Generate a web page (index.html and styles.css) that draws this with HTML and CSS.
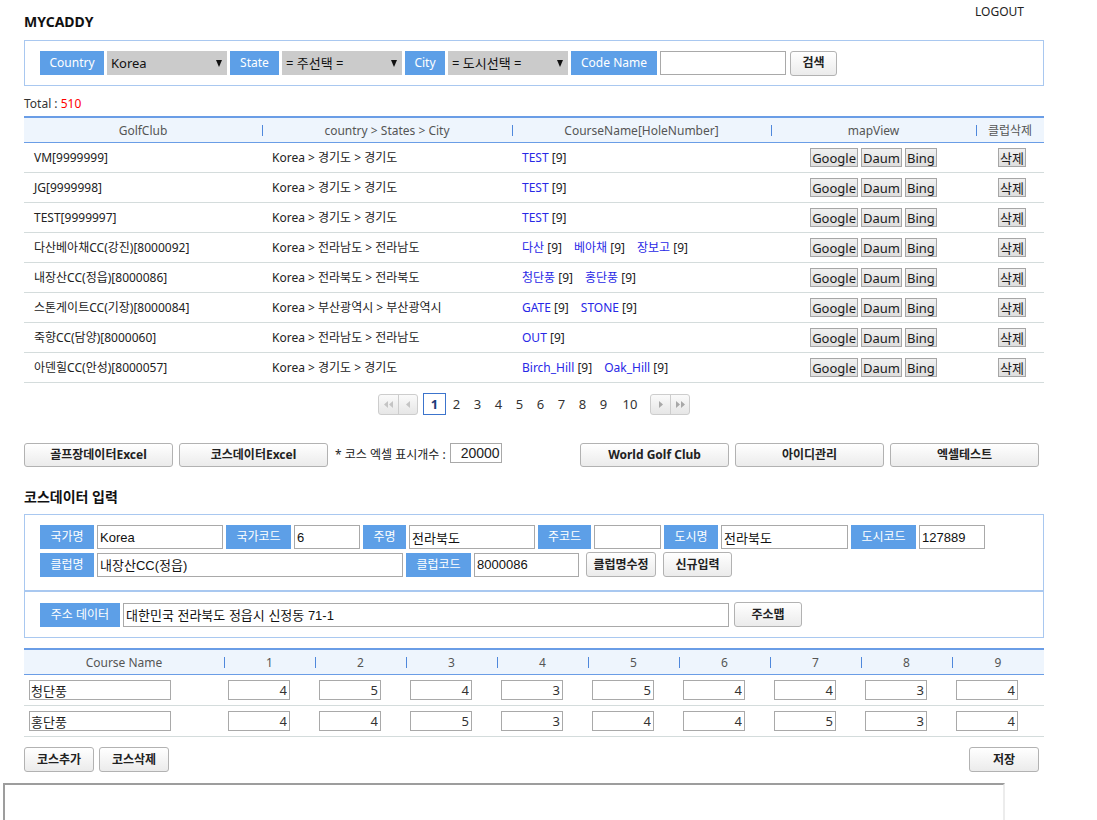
FILE: index.html
```html
<!DOCTYPE html>
<html lang="ko">
<head>
<meta charset="utf-8">
<title>MYCADDY</title>
<link rel="stylesheet" href="styles.css">
</head>
<body>
<div class="page">
  <header class="top">
    <h1 class="brand">MYCADDY</h1>
    <a class="logout" href="#">LOGOUT</a>
  </header>

  <form class="search">
    <span class="lbl w-country">Country</span>
    <div class="sel"><select><option>Korea</option></select><span class="caret"></span></div>
    <span class="lbl w-state">State</span>
    <div class="sel"><select><option>= 주선택 =</option></select><span class="caret"></span></div>
    <span class="lbl w-city">City</span>
    <div class="sel"><select><option>= 도시선택 =</option></select><span class="caret"></span></div>
    <span class="lbl w-code">Code Name</span>
    <input class="sinput" type="text">
    <button class="btn btn-search" type="button">검색</button>
  </form>

  <div class="total">Total : <span class="count">510</span></div>

  <table class="list">
    <colgroup><col class="c1"><col class="c2"><col class="c3"><col class="c4"><col class="c5"></colgroup>
    <thead>
      <tr><th>GolfClub</th><th>country &gt; States &gt; City</th><th>CourseName[HoleNumber]</th><th>mapView</th><th>클럽삭제</th></tr>
    </thead>
    <tbody>
      <tr><td>VM[9999999]</td><td>Korea &gt; 경기도 &gt; 경기도</td><td><span class="crs"><a href="#">TEST</a> [9]</span></td><td><div class="maps"><button class="mb">Google</button><button class="mb">Daum</button><button class="mb">Bing</button></div></td><td class="ctr"><button class="mb">삭제</button></td></tr>
      <tr><td>JG[9999998]</td><td>Korea &gt; 경기도 &gt; 경기도</td><td><span class="crs"><a href="#">TEST</a> [9]</span></td><td><div class="maps"><button class="mb">Google</button><button class="mb">Daum</button><button class="mb">Bing</button></div></td><td class="ctr"><button class="mb">삭제</button></td></tr>
      <tr><td>TEST[9999997]</td><td>Korea &gt; 경기도 &gt; 경기도</td><td><span class="crs"><a href="#">TEST</a> [9]</span></td><td><div class="maps"><button class="mb">Google</button><button class="mb">Daum</button><button class="mb">Bing</button></div></td><td class="ctr"><button class="mb">삭제</button></td></tr>
      <tr><td>다산베아채CC(강진)[8000092]</td><td>Korea &gt; 전라남도 &gt; 전라남도</td><td><span class="crs"><a href="#">다산</a> [9]</span><span class="crs"><a href="#">베아채</a> [9]</span><span class="crs"><a href="#">장보고</a> [9]</span></td><td><div class="maps"><button class="mb">Google</button><button class="mb">Daum</button><button class="mb">Bing</button></div></td><td class="ctr"><button class="mb">삭제</button></td></tr>
      <tr><td>내장산CC(정읍)[8000086]</td><td>Korea &gt; 전라북도 &gt; 전라북도</td><td><span class="crs"><a href="#">청단풍</a> [9]</span><span class="crs"><a href="#">홍단풍</a> [9]</span></td><td><div class="maps"><button class="mb">Google</button><button class="mb">Daum</button><button class="mb">Bing</button></div></td><td class="ctr"><button class="mb">삭제</button></td></tr>
      <tr><td>스톤게이트CC(기장)[8000084]</td><td>Korea &gt; 부산광역시 &gt; 부산광역시</td><td><span class="crs"><a href="#">GATE</a> [9]</span><span class="crs"><a href="#">STONE</a> [9]</span></td><td><div class="maps"><button class="mb">Google</button><button class="mb">Daum</button><button class="mb">Bing</button></div></td><td class="ctr"><button class="mb">삭제</button></td></tr>
      <tr><td>죽향CC(담양)[8000060]</td><td>Korea &gt; 전라남도 &gt; 전라남도</td><td><span class="crs"><a href="#">OUT</a> [9]</span></td><td><div class="maps"><button class="mb">Google</button><button class="mb">Daum</button><button class="mb">Bing</button></div></td><td class="ctr"><button class="mb">삭제</button></td></tr>
      <tr><td>아덴힐CC(안성)[8000057]</td><td>Korea &gt; 경기도 &gt; 경기도</td><td><span class="crs"><a href="#">Birch_Hill</a> [9]</span><span class="crs"><a href="#">Oak_Hill</a> [9]</span></td><td><div class="maps"><button class="mb">Google</button><button class="mb">Daum</button><button class="mb">Bing</button></div></td><td class="ctr"><button class="mb">삭제</button></td></tr>
    </tbody>
  </table>

  <nav class="pager">
    <span class="nav">
      <span class="nv"><svg width="9" height="7" viewBox="0 0 9 7"><path d="M4 0 L0 3.5 L4 7Z M9 0 L5 3.5 L9 7Z" fill="#c4c4c4"/></svg></span>
      <span class="nv"><svg width="4" height="7" viewBox="0 0 4 7"><path d="M4 0 L0 3.5 L4 7Z" fill="#c4c4c4"/></svg></span>
    </span>
    <span class="pg cur">1</span>
    <span class="pg">2</span>
    <span class="pg">3</span>
    <span class="pg">4</span>
    <span class="pg">5</span>
    <span class="pg">6</span>
    <span class="pg">7</span>
    <span class="pg">8</span>
    <span class="pg">9</span>
    <span class="pg pg-wide">10</span>
    <span class="nav nav-r">
      <span class="nv"><svg width="4" height="7" viewBox="0 0 4 7"><path d="M0 0 L4 3.5 L0 7Z" fill="#a8a8a8"/></svg></span>
      <span class="nv"><svg width="9" height="7" viewBox="0 0 9 7"><path d="M0 0 L4 3.5 L0 7Z M5 0 L9 3.5 L5 7Z" fill="#a8a8a8"/></svg></span>
    </span>
  </nav>

  <div class="actions">
    <button class="btn wide" type="button">골프장데이터Excel</button>
    <button class="btn wide" type="button">코스데이터Excel</button>
    <span class="cnt-text">* 코스 엑셀 표시개수 :</span>
    <input class="cnt-input" type="text" value="20000">
    <div class="right-group">
      <button class="btn wide" type="button">World Golf Club</button>
      <button class="btn wide" type="button">아이디관리</button>
      <button class="btn wide" type="button">엑셀테스트</button>
    </div>
  </div>

  <h2 class="sub">코스데이터 입력</h2>

  <div class="fbox fbox-1">
    <div class="frow">
      <span class="lbl f54">국가명</span><input class="fin w126" type="text" value="Korea">
      <span class="lbl f65">국가코드</span><input class="fin w66" type="text" value="6">
      <span class="lbl f43">주명</span><input class="fin w126" type="text" value="전라북도">
      <span class="lbl f53">주코드</span><input class="fin w67" type="text" value="">
      <span class="lbl f54">도시명</span><input class="fin w127" type="text" value="전라북도">
      <span class="lbl f65">도시코드</span><input class="fin w66" type="text" value="127889">
    </div>
    <div class="frow">
      <span class="lbl f54">클럽명</span><input class="fin w306" type="text" value="내장산CC(정읍)">
      <span class="lbl f65">클럽코드</span><input class="fin w105" type="text" value="8000086">
      <button class="btn fbtn b70" type="button">클럽명수정</button>
      <button class="btn fbtn b69" type="button">신규입력</button>
    </div>
  </div>
  <div class="fbox fbox-2">
    <div class="frow">
      <span class="lbl f80">주소 데이터</span><input class="fin w606" type="text" value="대한민국 전라북도 정읍시 신정동 71-1">
      <button class="btn addr-btn" type="button">주소맵</button>
    </div>
  </div>

  <table class="course">
    <colgroup><col class="k0"><col class="k"><col class="k"><col class="k"><col class="k"><col class="k"><col class="k"><col class="k"><col class="k"><col class="k9"></colgroup>
    <thead>
      <tr><th>Course Name</th><th>1</th><th>2</th><th>3</th><th>4</th><th>5</th><th>6</th><th>7</th><th>8</th><th>9</th></tr>
    </thead>
    <tbody>
      <tr>
        <td class="nm"><input class="cname" type="text" value="청단풍"></td>
        <td><input class="par" type="text" value="4"></td><td><input class="par" type="text" value="5"></td><td><input class="par" type="text" value="4"></td>
        <td><input class="par" type="text" value="3"></td><td><input class="par" type="text" value="5"></td><td><input class="par" type="text" value="4"></td>
        <td><input class="par" type="text" value="4"></td><td><input class="par" type="text" value="3"></td><td class="last"><input class="par" type="text" value="4"></td>
      </tr>
      <tr>
        <td class="nm"><input class="cname" type="text" value="홍단풍"></td>
        <td><input class="par" type="text" value="4"></td><td><input class="par" type="text" value="4"></td><td><input class="par" type="text" value="5"></td>
        <td><input class="par" type="text" value="3"></td><td><input class="par" type="text" value="4"></td><td><input class="par" type="text" value="4"></td>
        <td><input class="par" type="text" value="5"></td><td><input class="par" type="text" value="3"></td><td class="last"><input class="par" type="text" value="4"></td>
      </tr>
    </tbody>
  </table>

  <div class="course-actions">
    <button class="btn small" type="button">코스추가</button>
    <button class="btn small" type="button">코스삭제</button>
    <button class="btn small save" type="button">저장</button>
  </div>
</div>
<div class="frame"></div>
</body>
</html>
```

FILE: styles.css
```css
* { box-sizing: border-box; }
html, body { margin: 0; padding: 0; background: #fff; }
body {
  font-family: "Noto Sans", "Noto Sans CJK KR", sans-serif;
  font-size: 12px;
  line-height: 16px;
  color: #222;
}
input, select, button { font-family: "Noto Sans", "Noto Sans CJK KR", sans-serif; }

.page { width: 1020px; margin-left: 24px; }

/* header */
.top { display: flex; justify-content: space-between; align-items: flex-start; height: 40px; }
.brand { margin: 12px 0 0; font-size: 14px; line-height: 20px; font-weight: bold; color: #111; }
.logout { margin: 4px 20px 0 0; font-size: 12px; line-height: 16px; color: #222; text-decoration: none; }

/* search bar */
.search {
  display: flex; align-items: center; gap: 3px;
  height: 46px; margin: 0; padding: 0 15px;
  border: 1px solid #a9c8f0;
}
.lbl {
  display: inline-flex; align-items: center; justify-content: center;
  flex: none; height: 24px;
  background: #5d9fe7; color: #fff; font-size: 12px; line-height: 16px;
}
.w-country { width: 64px; }
.w-state { width: 49px; }
.w-city { width: 40px; }
.w-code { width: 86px; }
.sel {
  display: flex; align-items: center; flex: none;
  width: 120px; height: 24px; padding: 0 5px 0 4px;
  background: #cbcbcb;
}
.sel select {
  flex: 1; min-width: 0; appearance: none; -webkit-appearance: none;
  border: 0; background: transparent; padding: 0; outline: 0;
  font-size: 13px; color: #111; height: 22px;
}
.caret {
  flex: none; width: 0; height: 0;
  border-left: 3.5px solid transparent; border-right: 3.5px solid transparent;
  border-top: 7px solid #111;
}
.sinput { flex: none; width: 126px; height: 24px; border: 1px solid #a9a9a9; padding: 0 3px; }

.btn {
  flex: none; height: 25px; padding: 0;
  border: 1px solid #b2b2b2; border-radius: 3px;
  background: linear-gradient(#ffffff, #ebebeb);
  font-size: 12px; font-weight: bold; color: #222; line-height: 16px;
}
.btn-search { width: 47px; margin-left: 1px; }

.total { margin-top: 10px; line-height: 16px; color: #333; }
.count { color: #f00; }

/* list table */
.list {
  width: 1020px; margin-top: 4px;
  table-layout: fixed; border-collapse: separate; border-spacing: 0;
}
.list .c1 { width: 238px; }
.list .c2 { width: 250px; }
.list .c3 { width: 259px; }
.list .c4 { width: 205px; }
.list .c5 { width: 68px; }
.list th, .course th {
  position: relative;
  height: 27px; padding: 1px 0 0;
  background: #eef5fd; color: #555;
  font-weight: normal; font-size: 12px;
  border-top: 2px solid #6a9de6; border-bottom: 1px solid #6a9de6;
}
.list th + th::before, .course th + th::before {
  content: ""; position: absolute; left: 0; top: 7px;
  width: 1px; height: 11px; background: #4f88dc;
}
.list td {
  height: 30px; padding: 0 10px;
  border-bottom: 1px solid #d4dcdc;
  white-space: nowrap; color: #222;
}
.list td.ctr { text-align: center; padding: 0 0 0 4px; }
.crs { margin-right: 12px; }
.crs a { color: #2828e6; text-decoration: none; }
.maps { display: flex; justify-content: center; gap: 3px; }
.mb {
  height: 19px; padding: 0 1px;
  border: 1px solid #a6a6a6; border-radius: 0;
  background: linear-gradient(#f0f0f0, #dedede);
  font-size: 13px; line-height: 16px; color: #1a1a1a;
}

/* pager */
.pager { display: flex; justify-content: center; align-items: center; margin-top: 10px; height: 22px; }
.nav {
  display: flex; height: 21px;
  border: 1px solid #cdcdcd; border-radius: 3px;
  background: linear-gradient(#fafafa, #e6e6e6);
  margin-right: 5px;
}
.nav-r { margin: 0 0 0 4px; }
.nv { display: flex; align-items: center; justify-content: center; width: 19px; }
.nv + .nv { border-left: 1px solid #cdcdcd; }
.pg { width: 21px; text-align: center; font-size: 13px; line-height: 21px; color: #333; }
.pg-wide { width: 32px; }
.pg.cur { width: 23px; border: 1px solid #3c74cc; line-height: 20px; color: #1c3c78; font-weight: bold; }

/* actions */
.actions { display: flex; align-items: center; gap: 6px; margin-top: 28px; }
.btn.wide { width: 149px; height: 24px; }
.cnt-text { margin-left: 1px; color: #222; }
.cnt-input {
  align-self: flex-start; width: 52px; height: 20px; margin-left: -2px;
  border: 1px solid #a9a9a9; padding: 0 1px 0 0;
  text-align: right; font-family: "Liberation Sans", sans-serif; font-size: 14px; color: #222;
}
.right-group { display: flex; gap: 6px; margin-left: auto; margin-right: 5px; }

.sub { margin: 20px 0 7px; font-size: 14px; line-height: 20px; font-weight: bold; color: #111; }

/* course input form */
.fbox { border: 1px solid #a9c8f0; padding: 10px 15px 13px; }
.fbox-2 { padding: 10px 15px 10px; }
.frow { display: flex; align-items: center; gap: 3px; height: 24px; }
.frow + .frow { margin-top: 3px; height: 25px; }
.fbox-2 .frow { height: 25px; }
.f54 { width: 54px; }
.f65 { width: 65px; }
.f43 { width: 43px; }
.f53 { width: 53px; }
.f80 { width: 80px; }
.fin {
  flex: none; height: 24px; padding: 0 2px;
  border: 1px solid #a9a9a9;
  font-family: "Liberation Sans", "Noto Sans CJK KR", sans-serif; font-size: 13px; color: #111;
}
.w66 { width: 66px; }
.w67 { width: 67px; }
.w105 { width: 105px; }
.w126 { width: 126px; }
.w127 { width: 127px; }
.w306 { width: 306px; }
.w606 { width: 606px; }
.fbtn { height: 25px; }
.b70 { width: 70px; margin-left: 4px; }
.b69 { width: 69px; margin-left: 4px; }
.addr-btn { width: 68px; margin-left: 2px; }

/* course table */
.course {
  width: 1020px; margin-top: 10px;
  table-layout: fixed; border-collapse: separate; border-spacing: 0;
}
.course .k0 { width: 200px; }
.course .k { width: 91px; }
.course .k9 { width: 92px; }
.course th { height: 27px; }
.course td { height: 31px; padding: 0 0 0 4px; border-bottom: 1px solid #d4dcdc; }
.course td.nm { padding-left: 5px; }
.cname {
  display: block; width: 142px; height: 20px; padding: 0 1px;
  border: 1px solid #a9a9a9; font-size: 13px; color: #222;
}
.par {
  display: block; width: 62px; height: 20px; padding: 0 2px 0 0;
  border: 1px solid #a9a9a9; text-align: right; font-size: 13px; color: #333;
}

.course-actions { display: flex; gap: 5px; margin-top: 10px; }
.btn.small { width: 70px; height: 25px; }
.btn.save { margin-left: auto; margin-right: 5px; }

.frame {
  width: 1002px; height: 60px; margin: 11px 0 0 3px;
  border-style: solid; border-width: 2px;
  border-color: #9d9d9d #ececec #ececec #9d9d9d;
}
```
